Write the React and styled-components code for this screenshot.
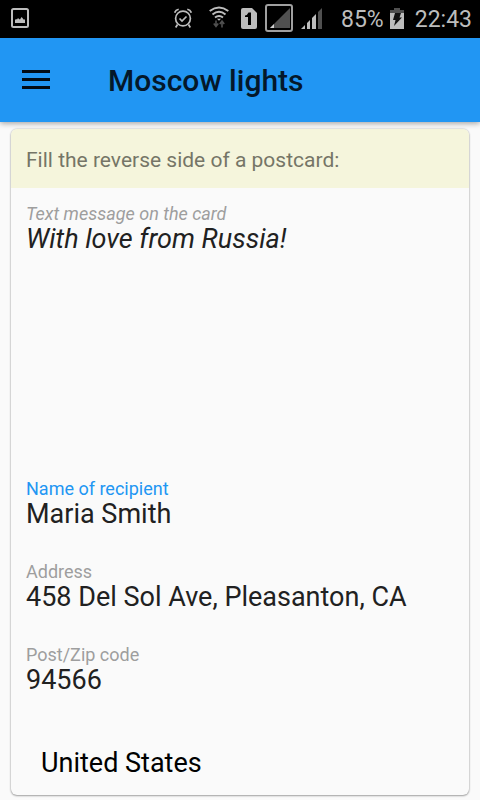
import React from "react";
import styled, { createGlobalStyle } from "styled-components";

const GlobalStyle = createGlobalStyle`
  *, *::before, *::after { box-sizing: border-box; }
  body { margin: 0; background: #fafafa; font-family: Roboto, sans-serif; }
  input, textarea, select, button { font: inherit; color: inherit; }
`;

const Screen = styled.div`
  display: flex;
  flex-direction: column;
  min-height: 100vh;
`;

const StatusBar = styled.div`
  display: flex;
  align-items: center;
  justify-content: space-between;
  height: 38px;
  padding: 0 8px 0 11px;
  background: #000;
  color: #bdbdbd;

  svg { display: block; flex: none; margin-bottom: 2px; }
`;

const StatusGroup = styled.div`
  display: flex;
  align-items: center;
`;

const Icons = styled(StatusGroup)`
  gap: ${(p) => p.$gap}px;
  margin-right: ${(p) => p.$after}px;
`;

const StatusText = styled.span`
  padding-top: 1px;
  font-size: 23px;
  line-height: 37px;
  font-weight: 400;
`;

const Battery = styled(StatusGroup)`
  gap: 6px;
  margin-right: 11px;
`;

const AppBar = styled.header`
  position: relative;
  display: flex;
  align-items: center;
  gap: 52px;
  height: 84px;
  padding: 0 16px;
  background: #2196f3;
  box-shadow: 0 1px 6px rgba(0, 0, 0, 0.4);
`;

const MenuButton = styled.button`
  width: 40px;
  height: 40px;
  padding: 0;
  border: 0;
  background: none;

  svg { display: block; margin: auto; }
`;

const Title = styled.h1`
  margin: 0;
  padding-top: 2px;
  font-size: 30px;
  line-height: 36px;
  font-weight: 500;
  color: #04182a;
`;

const Card = styled.form`
  margin: 7px 11px 5px;
  border-radius: 6px;
  overflow: hidden;
  background: #fafafa;
  box-shadow: 0 0 2px rgba(0, 0, 0, 0.28), 0 1px 2px rgba(0, 0, 0, 0.3);
`;

const CardHeader = styled.h2`
  margin: 0;
  padding: 17px 15px 14px;
  font-size: 21px;
  line-height: 28px;
  font-weight: 400;
  color: #757567;
  background: #f5f5dc;
`;

const Fields = styled.div`
  display: flex;
  flex-direction: column;
  gap: 32px;
  padding: 15px 15px 17px;
`;

const Field = styled.div`
  display: flex;
  flex-direction: column;
  font-style: ${(p) => (p.$italic ? "italic" : "normal")};
`;

const Label = styled.label`
  font-size: 18px;
  line-height: 21px;
  color: ${(p) => (p.$active ? "#2196f3" : "#9e9e9e")};
`;

const Input = styled.input`
  width: 100%;
  height: 30px;
  padding: 0;
  border: 0;
  outline: 0;
  background: none;
  font-size: 27px;
  line-height: 30px;
  color: #212121;
`;

const Message = styled(Input).attrs({ as: "textarea" })`
  height: 222px;
  resize: none;
`;

const Country = styled.select`
  appearance: none;
  width: 100%;
  height: 30px;
  margin-top: 21px;
  padding: 0 15px;
  border: 0;
  outline: 0;
  background: none;
  font-size: 27px;
  line-height: 30px;
  color: #000;
`;

const PictureIcon = () => (
  <svg width="18" height="20" viewBox="0 0 18 20">
    <rect x="1" y="1" width="16" height="18" rx="1.5" fill="none" stroke="#bdbdbd" strokeWidth="2" />
    <path d="M4 15v-3l1-1 1 .5 1-1.500 1 1 1 .5L10.500 9l1 1 1 1.500H14V15z" fill="#bdbdbd" />
  </svg>
);

const AlarmIcon = () => (
  <svg width="18" height="20" viewBox="0 0 18 20" fill="none" stroke="#bdbdbd" strokeWidth="1.7">
    <circle cx="9" cy="10.5" r="7.4" />
    <path d="M.7 4.700Q1.500 2 4.700 1.200M17.300 4.700Q16.500 2 13.300 1.200M3.500 16.500 1.700 19.500M14.500 16.500l1.800 3M5.500 10.500l2.500 2.500 4.500-4.500" />
  </svg>
);

const WifiIcon = () => (
  <svg width="20" height="24" viewBox="0 0 20 24" fill="none" stroke="#bdbdbd" strokeWidth="2">
    <path d="M.7 5Q10-2 19.300 5M3.500 8.500Q10 3 16.500 8.500M6 11.500Q10 8.500 14 11.500" />
    <path d="M8 12.800h4l-2 2z" fill="#bdbdbd" stroke="none" />
    <path d="M7 14.500v6M4.800 17.500 7 20.500l2.200-3M13 21.500v-6M10.800 18 13 15l2.200 3" stroke="#505050" strokeWidth="1.6" />
  </svg>
);

const SimIcon = () => (
  <svg width="16" height="21" viewBox="0 0 16 21">
    <path d="M2 0h9l5 5v14a2 2 0 0 1-2 2H2a2 2 0 0 1-2-2V2a2 2 0 0 1 2-2z" fill="#bdbdbd" />
    <path d="M4 7.500Q6.500 7 7.500 4.500H10V17H7V9H4z" fill="#000" />
  </svg>
);

const SignalBoxIcon = () => (
  <svg width="28" height="28" viewBox="0 0 28 28">
    <rect x="1" y="1" width="26" height="26" rx="2" fill="none" stroke="#a0a0a0" strokeWidth="2" />
    <path d="M5 24 25 4v20z" fill="#505050" />
    <path d="M5 24l4-4v4z" fill="#d0d0d0" />
  </svg>
);

const SignalIcon = () => (
  <svg width="21" height="21" viewBox="0 0 21 21">
    <path d="M0 21l4-4v4zM6 15l3-3v9H6zM11 10l4-4v15h-4z" fill="#bdbdbd" />
    <path d="M17 4l4-4v21h-4z" fill="#505050" />
  </svg>
);

const BatteryIcon = () => (
  <svg width="14" height="21" viewBox="0 0 14 21">
    <path d="M4 0h6v2h4v3H0V2h4z" fill="#505050" />
    <path d="M0 5h14v16H0z" fill="#bdbdbd" />
    <path d="M5 5h6L9.500 9.500H12L4 18l1.500-6H3z" fill="#111" />
  </svg>
);

const MenuIcon = () => (
  <svg width="28" height="22" viewBox="0 0 28 22">
    <path d="M0 2.500h28M0 10.500h28M0 18.500h28" stroke="#020c15" strokeWidth="3.2" />
  </svg>
);

const fields = [
  { id: "name", label: "Name of recipient", value: "Maria Smith", active: true },
  { id: "address", label: "Address", value: "458 Del Sol Ave, Pleasanton, CA" },
  { id: "zip", label: "Post/Zip code", value: "94566" },
];

export default function App() {
  return (
    <Screen>
      <GlobalStyle />
      <StatusBar>
        <PictureIcon />
        <StatusGroup>
          <Icons $gap={17} $after={12}>
            <AlarmIcon />
            <WifiIcon />
          </Icons>
          <Icons $gap={8} $after={19}>
            <SimIcon />
            <SignalBoxIcon />
            <SignalIcon />
          </Icons>
          <Battery>
            <StatusText>85%</StatusText>
            <BatteryIcon />
          </Battery>
          <StatusText>22:43</StatusText>
        </StatusGroup>
      </StatusBar>
      <AppBar>
        <MenuButton type="button" aria-label="Menu">
          <MenuIcon />
        </MenuButton>
        <Title>Moscow lights</Title>
      </AppBar>
      <Card>
        <CardHeader>Fill the reverse side of a postcard:</CardHeader>
        <Fields>
          <Field $italic>
            <Label htmlFor="message">Text message on the card</Label>
            <Message id="message" defaultValue="With love from Russia!" />
          </Field>
          {fields.map((f) => (
            <Field key={f.id}>
              <Label htmlFor={f.id} $active={f.active}>{f.label}</Label>
              <Input id={f.id} type="text" defaultValue={f.value} />
            </Field>
          ))}
          <Country aria-label="Country" defaultValue="us">
            <option value="us">United States</option>
          </Country>
        </Fields>
      </Card>
    </Screen>
  );
}
